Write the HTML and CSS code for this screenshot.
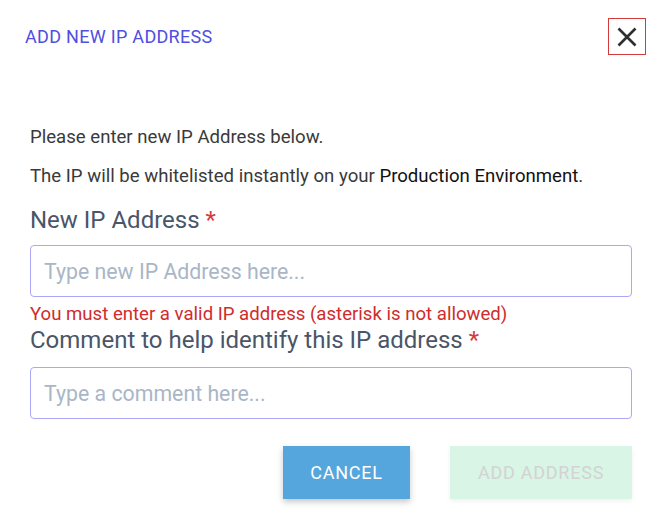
FILE: index.html
```html
<!DOCTYPE html>
<html lang="en">
<head>
<meta charset="utf-8">
<title>Add new IP address</title>
<link rel="stylesheet" href="styles.css">
</head>
<body>
<div class="dialog">
  <header class="dialog-header">
    <h2 class="title">ADD NEW IP ADDRESS</h2>
    <button class="close" type="button" aria-label="Close">
      <svg width="20" height="20" viewBox="0 0 20 20" aria-hidden="true">
        <path d="M1.5 1.5 L18.5 18.5 M18.5 1.5 L1.5 18.5" stroke="#2f2f2f" stroke-width="2.6" fill="none"/>
      </svg>
    </button>
  </header>
  <div class="dialog-body">
    <p class="intro intro-first">Please enter new IP Address below.</p>
    <p class="intro intro-second">The IP will be whitelisted instantly on your <span class="strong">Production Environment</span>.</p>
    <label class="field-label label-ip" for="ip">New IP Address <span class="req">*</span></label>
    <input class="field field-ip" id="ip" type="text" placeholder="Type new IP Address here...">
    <div class="error">You must enter a valid IP address (asterisk is not allowed)</div>
    <label class="field-label label-comment" for="comment">Comment to help identify this IP address <span class="req">*</span></label>
    <input class="field field-comment" id="comment" type="text" placeholder="Type a comment here...">
    <div class="actions">
      <button class="btn btn-cancel" type="button">CANCEL</button>
      <button class="btn btn-add" type="button" disabled>ADD ADDRESS</button>
    </div>
  </div>
</div>
</body>
</html>
```
FILE: styles.css
```css
* { box-sizing: border-box; }
html, body {
  margin: 0;
  padding: 0;
  background: #ffffff;
}
body {
  font-family: Roboto, "Liberation Sans", sans-serif;
  width: 664px;
  height: 520px;
  overflow: hidden;
}
.dialog {
  display: flex;
  flex-direction: column;
}
.dialog-header {
  display: flex;
  align-items: center;
  justify-content: space-between;
  padding: 18px 18px 0 25px;
}
.title {
  margin: 0;
  font-size: 18px;
  line-height: 24px;
  font-weight: 400;
  letter-spacing: 0.3px;
  color: #4f4fe0;
}
.close {
  width: 38px;
  height: 37px;
  padding: 0;
  margin: 0;
  border: 1px solid #d43a3a;
  background: #ffffff;
  display: flex;
  align-items: center;
  justify-content: center;
  cursor: pointer;
}
.close svg { display: block; }
.dialog-body {
  display: flex;
  flex-direction: column;
  padding: 0 32px 0 30px;
}
.intro {
  margin: 0;
  font-size: 18.6px;
  line-height: 24px;
  color: #3a3a3a;
}
.intro-first { margin-top: 70px; }
.intro-second { margin-top: 15px; }
.strong { color: #111111; }
.field-label {
  display: block;
  font-size: 24px;
  line-height: 28px;
  color: #4a5568;
}
.label-ip { margin-top: 18px; }
.label-comment { margin-top: 0; }
.req { color: #d63a3a; }
.field {
  display: block;
  width: 100%;
  height: 52px;
  margin: 0;
  padding: 0 13px;
  border: 1px solid #aca7f4;
  border-radius: 4px;
  font-family: Roboto, "Liberation Sans", sans-serif;
  font-size: 21.3px;
  color: #2d3748;
  background: #ffffff;
  outline: none;
}
.field::placeholder { color: #a9b6c6; opacity: 1; }
.field-ip { margin-top: 11px; }
.field-comment { margin-top: 13px; }
.error {
  margin-top: 6px;
  font-size: 18.6px;
  line-height: 23px;
  color: #d02c2c;
}
.actions {
  display: flex;
  justify-content: flex-end;
  gap: 40px;
  margin-top: 27px;
}
.btn {
  height: 53px;
  border: none;
  border-radius: 0;
  font-family: Roboto, "Liberation Sans", sans-serif;
  font-size: 18px;
  letter-spacing: 0.75px;
  padding: 0;
  cursor: pointer;
}
.btn-cancel {
  width: 127px;
  background: #55a6dc;
  color: #ffffff;
  box-shadow: 0 3px 6px rgba(0, 0, 0, 0.22);
}
.btn-add {
  width: 182px;
  background: #d8f5e6;
  color: #d3d3d3;
  box-shadow: 0 2px 5px rgba(0, 0, 0, 0.06);
  cursor: default;
}
```
